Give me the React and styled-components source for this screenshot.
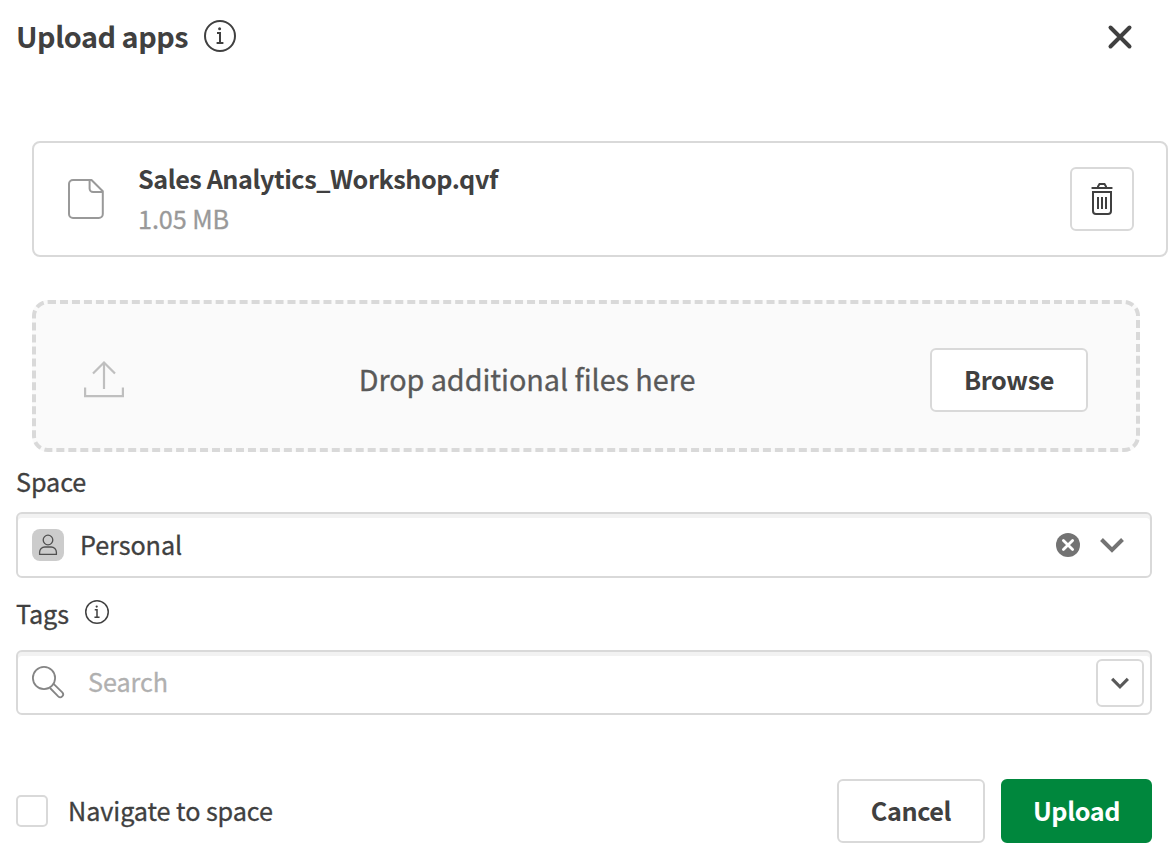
import React from "react";
import styled, { createGlobalStyle } from "styled-components";

const Global = createGlobalStyle`
  *, *::before, *::after { box-sizing: border-box; }
  body {
    margin: 0;
    background: #fff;
    color: #404040;
    font-family: "Noto Sans CJK SC", "Noto Sans CJK JP", sans-serif;
    font-size: 25.2px;
    line-height: 32px;
    letter-spacing: -0.07px;
    -webkit-text-stroke: 0.3px currentColor;
  }
  button, input { font: inherit; color: inherit; letter-spacing: inherit; }
  svg { display: block; flex: none; overflow: visible; }
`;

const Dialog = styled.main`
  width: 1168px;
  height: 862px;
  display: flex;
  flex-direction: column;
  overflow: hidden;
  background: #fff;
`;

const Header = styled.header`
  display: flex;
  align-items: center;
  height: 72px;
  padding: 0 32px 0 16px;
  gap: 16px;
`;

const Title = styled.h1`
  margin: 0;
  font-size: 28.8px;
  font-weight: 600;
  letter-spacing: -0.47px;
  -webkit-text-stroke: 0;
`;

const CloseButton = styled.button`
  margin-left: auto;
  display: flex;
  padding: 2px 0 0;
  border: 0;
  background: none;
`;

const OutlineButton = styled.button`
  display: flex;
  align-items: center;
  justify-content: center;
  width: ${(p) => p.$width}px;
  height: 64px;
  padding: 0 0 2px;
  flex: none;
  font-weight: 600;
  letter-spacing: -0.38px;
  -webkit-text-stroke: 0;
  border-radius: 6px;
  border: 2px solid ${(p) => (p.$primary ? "#00873d" : "#d9d9d9")};
  background: ${(p) => (p.$primary ? "#00873d" : "#fff")};
  color: ${(p) => (p.$primary ? "#fff" : "#404040")};
  svg { margin-bottom: -2px; }
`;

const FileCard = styled.section`
  display: flex;
  align-items: center;
  width: 1136px;
  height: 116px;
  margin: 69px 0 0 32px;
  padding: 0 32px;
  border: 2px solid #d9d9d9;
  border-radius: 8px;
`;

const FileText = styled.div`
  flex: 1;
  display: flex;
  flex-direction: column;
  gap: 8px;
  margin-left: 32px;
  padding-bottom: 3px;
`;

const FileName = styled.strong`
  font-weight: 600;
  letter-spacing: -0.45px;
  -webkit-text-stroke: 0;
`;

const FileSize = styled.span`
  color: #999;
`;

const DropZone = styled.section`
  display: flex;
  align-items: center;
  width: 1108px;
  height: 152px;
  margin: 43px 0 0 32px;
  padding: 8px 48px 0;
  border: 4px dashed #d9d9d9;
  border-radius: 16px;
  background: #fafafa;
`;

const DropText = styled.p`
  flex: 1;
  margin: 0;
  padding-bottom: 2px;
  text-align: center;
  font-size: 28.8px;
  color: #595959;
`;

const Label = styled.label`
  display: flex;
  align-items: center;
  gap: 16px;
  height: 32px;
  margin: ${(p) => p.$top}px 0 0 16px;
  svg { margin-bottom: 3px; }
`;

const Field = styled.div`
  display: flex;
  align-items: center;
  width: 1136px;
  height: ${(p) => p.$height}px;
  margin: ${(p) => p.$top}px 0 0 16px;
  padding: 0 ${(p) => p.$right}px 0 14px;
  border: 2px solid #d9d9d9;
  border-radius: 6px;
  box-shadow: inset 0 4px 0 #f2f2f2;
`;

const Avatar = styled.span`
  display: flex;
  width: 32px;
  height: 32px;
  border-radius: 8px;
  background: #ccc;
`;

const FieldValue = styled.span`
  flex: 1;
  margin-left: 16px;
  padding-bottom: 2px;
`;

const IconButton = styled.button`
  display: flex;
  margin-left: ${(p) => p.$gap || 0}px;
  padding: 0;
  border: 0;
  background: none;
`;

const SearchInput = styled.input`
  flex: 1;
  margin: 0 0 4px 24px;
  padding: 0;
  height: 40px;
  border: 0;
  outline: 0;
  background: none;
  &::placeholder { color: #b0b0b0; opacity: 1; }
`;

const DropButton = styled.button`
  display: flex;
  align-items: center;
  justify-content: center;
  width: 48px;
  height: 48px;
  padding: 0;
  border: 2px solid #d9d9d9;
  border-radius: 6px;
  background: #fff;
`;

const Footer = styled.footer`
  display: flex;
  align-items: center;
  gap: 16px;
  height: 64px;
  margin-top: 64px;
  padding: 0 16px;
`;

const CheckLabel = styled.label`
  display: flex;
  align-items: center;
  gap: 20px;
  margin-right: auto;
`;

const CheckText = styled.span`
  padding-bottom: 2px;
`;

const Checkbox = styled.input`
  appearance: none;
  width: 32px;
  height: 32px;
  margin: 0;
  border: 2px solid #d9d9d9;
  border-radius: 5px;
`;

const InfoIcon = ({ size }) => (
  <svg width={size} height={size} viewBox="0 0 32 32" fill="none" stroke="#404040" strokeWidth="2">
    <circle cx="16" cy="16" r="15" />
    <path d="M13 13h3v10M12.6 23h6.8" />
    <circle cx="15.6" cy="8.8" r="1.5" fill="#404040" stroke="none" />
  </svg>
);

const CloseIcon = () => (
  <svg width="32" height="32" viewBox="0 0 32 32" stroke="#404040" strokeWidth="4" strokeLinecap="round">
    <path d="M6.5 6.5l19 19M25.5 6.5l-19 19" />
  </svg>
);

const FileIcon = () => (
  <svg width="40" height="42" viewBox="0 0 40 42" fill="none" stroke="#999" strokeWidth="2" strokeLinejoin="round">
    <path d="M7 2h18.5L36.8 13.3V36a4 4 0 0 1-4 4H7a4 4 0 0 1-4-4V6a4 4 0 0 1 4-4z" />
    <path d="M23.6 2v8.5a3.5 3.5 0 0 0 3.5 3.5h9.7" />
  </svg>
);

const TrashIcon = () => (
  <svg width="32" height="32" viewBox="0 0 32 32" fill="none" stroke="#404040" strokeWidth="2">
    <path d="M6.3 5h19.4" strokeLinecap="round" />
    <path d="M12 5V3.5L13.5 1h5L20 3.5V5M7 9h18v19a3 3 0 0 1-3 3H10a3 3 0 0 1-3-3zM12 14v12M16 14v12M20 14v12" />
  </svg>
);

const UploadIcon = () => (
  <svg width="40" height="40" viewBox="0 0 40 40" fill="none" stroke="#bfbfbf" strokeWidth="2.2">
    <path d="M1.1 27.5v8.7h37.8v-8.7M20 29V2.5M9 13.5L20 2.5l11 11" />
  </svg>
);

const PersonIcon = () => (
  <svg width="32" height="32" viewBox="0 0 32 32" fill="none" stroke="#505050" strokeWidth="1.3">
    <circle cx="16" cy="11" r="4.8" />
    <path d="M7.6 25.4v-2.2a5.2 5.2 0 0 1 5.2-5.2h6.4a5.2 5.2 0 0 1 5.2 5.2v2.2z" />
  </svg>
);

const ClearIcon = () => (
  <svg width="24" height="24" viewBox="0 0 24 24">
    <circle cx="12" cy="12" r="12" fill="#737373" />
    <path d="M7.4 7.4l9.2 9.2M16.6 7.4l-9.2 9.2" stroke="#fff" strokeWidth="2.8" strokeLinecap="round" />
  </svg>
);

const ChevronIcon = ({ width, color, stroke }) => (
  <svg width={width} height={width} viewBox="0 0 24 24" fill="none" stroke={color} strokeWidth={stroke}>
    <path d="M1.5 6.5L12 17 22.5 6.5" />
  </svg>
);

const SearchIcon = () => (
  <svg width="32" height="32" viewBox="0 0 32 32" fill="none" stroke="#858585" strokeWidth="1.8">
    <circle cx="12" cy="11" r="11.1" />
    <path d="M21.6 16.8l8.7 8.5a2.9 2.9 0 0 1-4.1 4.1l-8.2-8.4" />
  </svg>
);

export default function App() {
  return (
    <>
      <Global />
      <Dialog>
        <Header>
          <Title>Upload apps</Title>
          <InfoIcon size={32} />
          <CloseButton aria-label="Close"><CloseIcon /></CloseButton>
        </Header>
        <FileCard>
          <FileIcon />
          <FileText>
            <FileName>Sales Analytics_Workshop.qvf</FileName>
            <FileSize>1.05 MB</FileSize>
          </FileText>
          <OutlineButton $width={64} aria-label="Delete"><TrashIcon /></OutlineButton>
        </FileCard>
        <DropZone>
          <UploadIcon />
          <DropText>Drop additional files here</DropText>
          <OutlineButton $width={158}>Browse</OutlineButton>
        </DropZone>
        <Label $top={13}>Space</Label>
        <Field $top={15} $height={66} $right={26}>
          <Avatar><PersonIcon /></Avatar>
          <FieldValue>Personal</FieldValue>
          <IconButton aria-label="Clear"><ClearIcon /></IconButton>
          <IconButton $gap={20} aria-label="Open spaces">
            <ChevronIcon width={24} color="#737373" stroke={4} />
          </IconButton>
        </Field>
        <Label $top={19}>Tags <InfoIcon size={24} /></Label>
        <Field $top={21} $height={65} $right={6}>
          <SearchIcon />
          <SearchInput placeholder="Search" />
          <DropButton aria-label="Open tags">
            <ChevronIcon width={18} color="#595959" stroke={4.2} />
          </DropButton>
        </Field>
        <Footer>
          <CheckLabel><Checkbox type="checkbox" /><CheckText>Navigate to space</CheckText></CheckLabel>
          <OutlineButton $width={148}>Cancel</OutlineButton>
          <OutlineButton $width={151} $primary>Upload</OutlineButton>
        </Footer>
      </Dialog>
    </>
  );
}
